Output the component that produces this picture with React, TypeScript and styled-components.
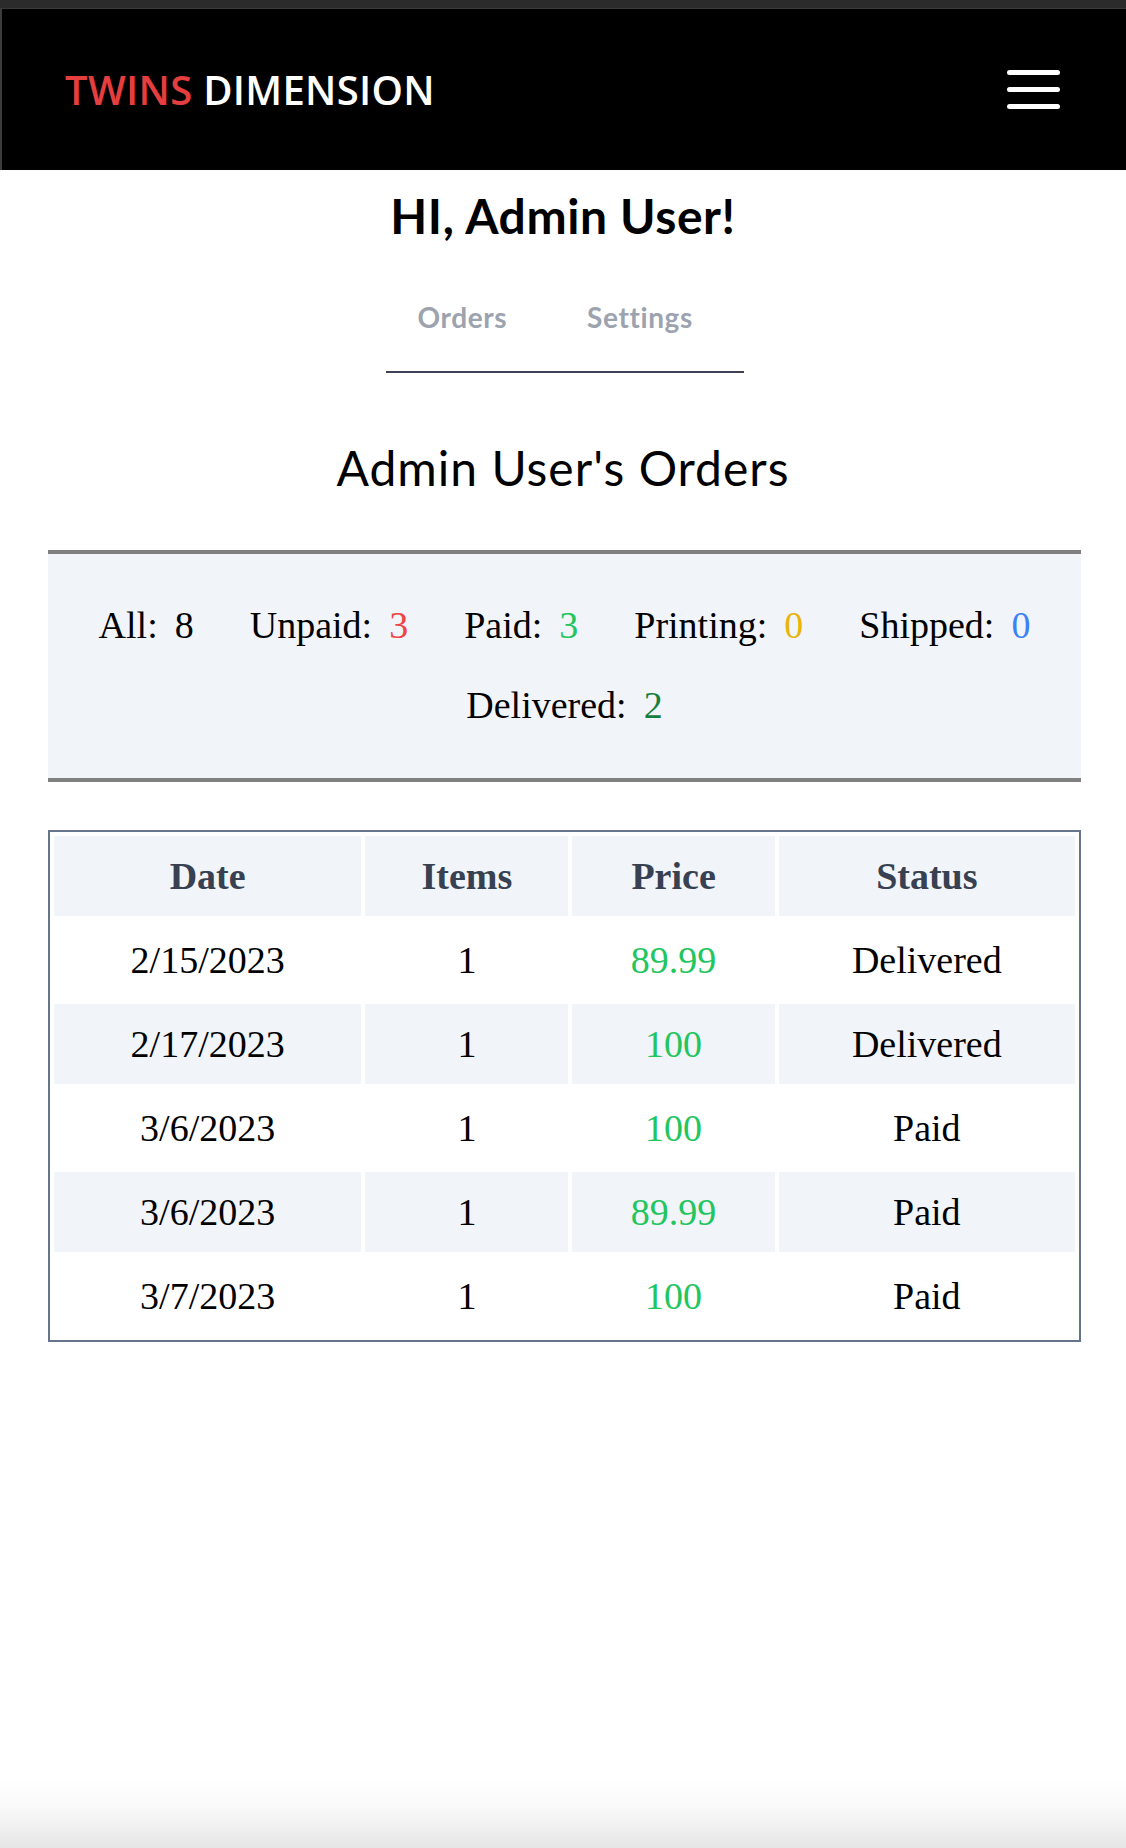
import styled, { createGlobalStyle } from "styled-components";

const GlobalStyle = createGlobalStyle`
  html, body {
    margin: 0;
    padding: 0;
    background: #ffffff;
  }
  * {
    box-sizing: border-box;
  }
`;

const Page = styled.div`
  min-height: 100vh;
  display: flex;
  flex-direction: column;
  background: #ffffff;
`;

const TopStrip = styled.div`
  height: 9px;
  background: #2b2b2b;
  border-bottom: 1px solid #3a3a3a;
`;

const Header = styled.header`
  height: 161px;
  background: #000000;
  border-left: 2px solid #3c3c3c;
  display: flex;
  align-items: center;
  justify-content: space-between;
  padding: 0 66px 0 63px;
`;

const Logo = styled.div`
  font-family: "Open Sans", "Liberation Sans", sans-serif;
  font-size: 40px;
  font-weight: 600;
  letter-spacing: 0.3px;
  color: #ffffff;
  .red {
    color: #e53e3e;
  }
`;

const Burger = styled.button`
  width: 53px;
  display: flex;
  flex-direction: column;
  gap: 12px;
  padding: 0;
  border: none;
  background: transparent;
  span {
    display: block;
    height: 5px;
    border-radius: 3px;
    background: #ffffff;
  }
`;

const Greeting = styled.h1`
  margin: 17px 0 0;
  text-align: center;
  font-family: "Lato", "Open Sans", sans-serif;
  font-size: 48px;
  line-height: 58px;
  font-weight: 700;
  letter-spacing: 0.6px;
  color: #000000;
`;

const Tabs = styled.nav`
  align-self: center;
  margin: 55px 0 0 3px;
  width: 358px;
  display: flex;
  gap: 80px;
  padding: 0 40px 37px 32px;
  border-bottom: 2px solid #3f3f55;
`;

const Tab = styled.a`
  font-family: "Lato", "Open Sans", sans-serif;
  font-size: 28px;
  line-height: 34px;
  font-weight: 700;
  letter-spacing: 0.6px;
  color: #9ca3af;
  text-decoration: none;
  cursor: pointer;
`;

const Title = styled.h2`
  margin: 66px 0 0;
  text-align: center;
  font-family: "Lato", "Open Sans", sans-serif;
  font-size: 48px;
  line-height: 58px;
  font-weight: 400;
  letter-spacing: 1px;
  color: #000000;
`;

const Counts = styled.section`
  margin: 53px 45px 0 48px;
  background: #f1f4f8;
  border-top: 4px solid #808080;
  border-bottom: 4px solid #808080;
  padding: 49px 16px 51px;
  display: flex;
  flex-wrap: wrap;
  justify-content: center;
  column-gap: 56px;
  row-gap: 36px;
`;

const Count = styled.div`
  display: flex;
  gap: 17px;
  font-family: "Liberation Serif", "DejaVu Serif", serif;
  font-size: 38px;
  line-height: 44px;
  color: #000000;
`;

const CountValue = styled.span<{ $color: string }>`
  color: ${(p) => p.$color};
`;

const Table = styled.table`
  margin: 48px 0 0 48px;
  width: 1033px;
  border: 2px solid #64748b;
  border-spacing: 4px;
  font-family: "Liberation Serif", "DejaVu Serif", serif;
  font-size: 38px;
`;

const HeadCell = styled.th<{ $w: number }>`
  width: ${(p) => p.$w}px;
  height: 80px;
  padding: 0;
  background: #f1f4f8;
  color: #374151;
  font-weight: 700;
  text-align: center;
  vertical-align: middle;
`;

const Row = styled.tr<{ $shade: boolean }>`
  td {
    background: ${(p) => (p.$shade ? "#f1f4f8" : "#ffffff")};
  }
`;

const Cell = styled.td<{ $price?: boolean }>`
  height: 80px;
  padding: 0;
  text-align: center;
  vertical-align: middle;
  color: ${(p) => (p.$price ? "#22c55e" : "#000000")};
`;

const Fade = styled.div`
  margin-top: auto;
  height: 70px;
  background: linear-gradient(#ffffff, #fafafa 40%, #e6e6e6);
`;

const counts = [
  { label: "All:", value: "8", color: "#000000" },
  { label: "Unpaid:", value: "3", color: "#ef4444" },
  { label: "Paid:", value: "3", color: "#22c55e" },
  { label: "Printing:", value: "0", color: "#eab308" },
  { label: "Shipped:", value: "0", color: "#3b82f6" },
  { label: "Delivered:", value: "2", color: "#15803d" },
];

const orders = [
  { date: "2/15/2023", items: 1, price: "89.99", status: "Delivered" },
  { date: "2/17/2023", items: 1, price: "100", status: "Delivered" },
  { date: "3/6/2023", items: 1, price: "100", status: "Paid" },
  { date: "3/6/2023", items: 1, price: "89.99", status: "Paid" },
  { date: "3/7/2023", items: 1, price: "100", status: "Paid" },
];

const App = () => {
  return (
    <Page>
      <GlobalStyle />
      <TopStrip />
      <Header>
        <Logo>
          <span className="red">TWINS</span> DIMENSION
        </Logo>
        <Burger aria-label="menu">
          <span />
          <span />
          <span />
        </Burger>
      </Header>
      <Greeting>HI, Admin User!</Greeting>
      <Tabs>
        <Tab>Orders</Tab>
        <Tab>Settings</Tab>
      </Tabs>
      <Title>Admin User's Orders</Title>
      <Counts>
        {counts.map((c) => (
          <Count key={c.label}>
            <span>{c.label}</span>
            <CountValue $color={c.color}>{c.value}</CountValue>
          </Count>
        ))}
      </Counts>
      <Table>
        <thead>
          <tr>
            <HeadCell $w={307}>Date</HeadCell>
            <HeadCell $w={203}>Items</HeadCell>
            <HeadCell $w={202}>Price</HeadCell>
            <HeadCell $w={296}>Status</HeadCell>
          </tr>
        </thead>
        <tbody>
          {orders.map((o, i) => (
            <Row key={i} $shade={i % 2 === 1}>
              <Cell>{o.date}</Cell>
              <Cell>{o.items}</Cell>
              <Cell $price>{o.price}</Cell>
              <Cell>{o.status}</Cell>
            </Row>
          ))}
        </tbody>
      </Table>
      <Fade />
    </Page>
  );
};

export default App;
